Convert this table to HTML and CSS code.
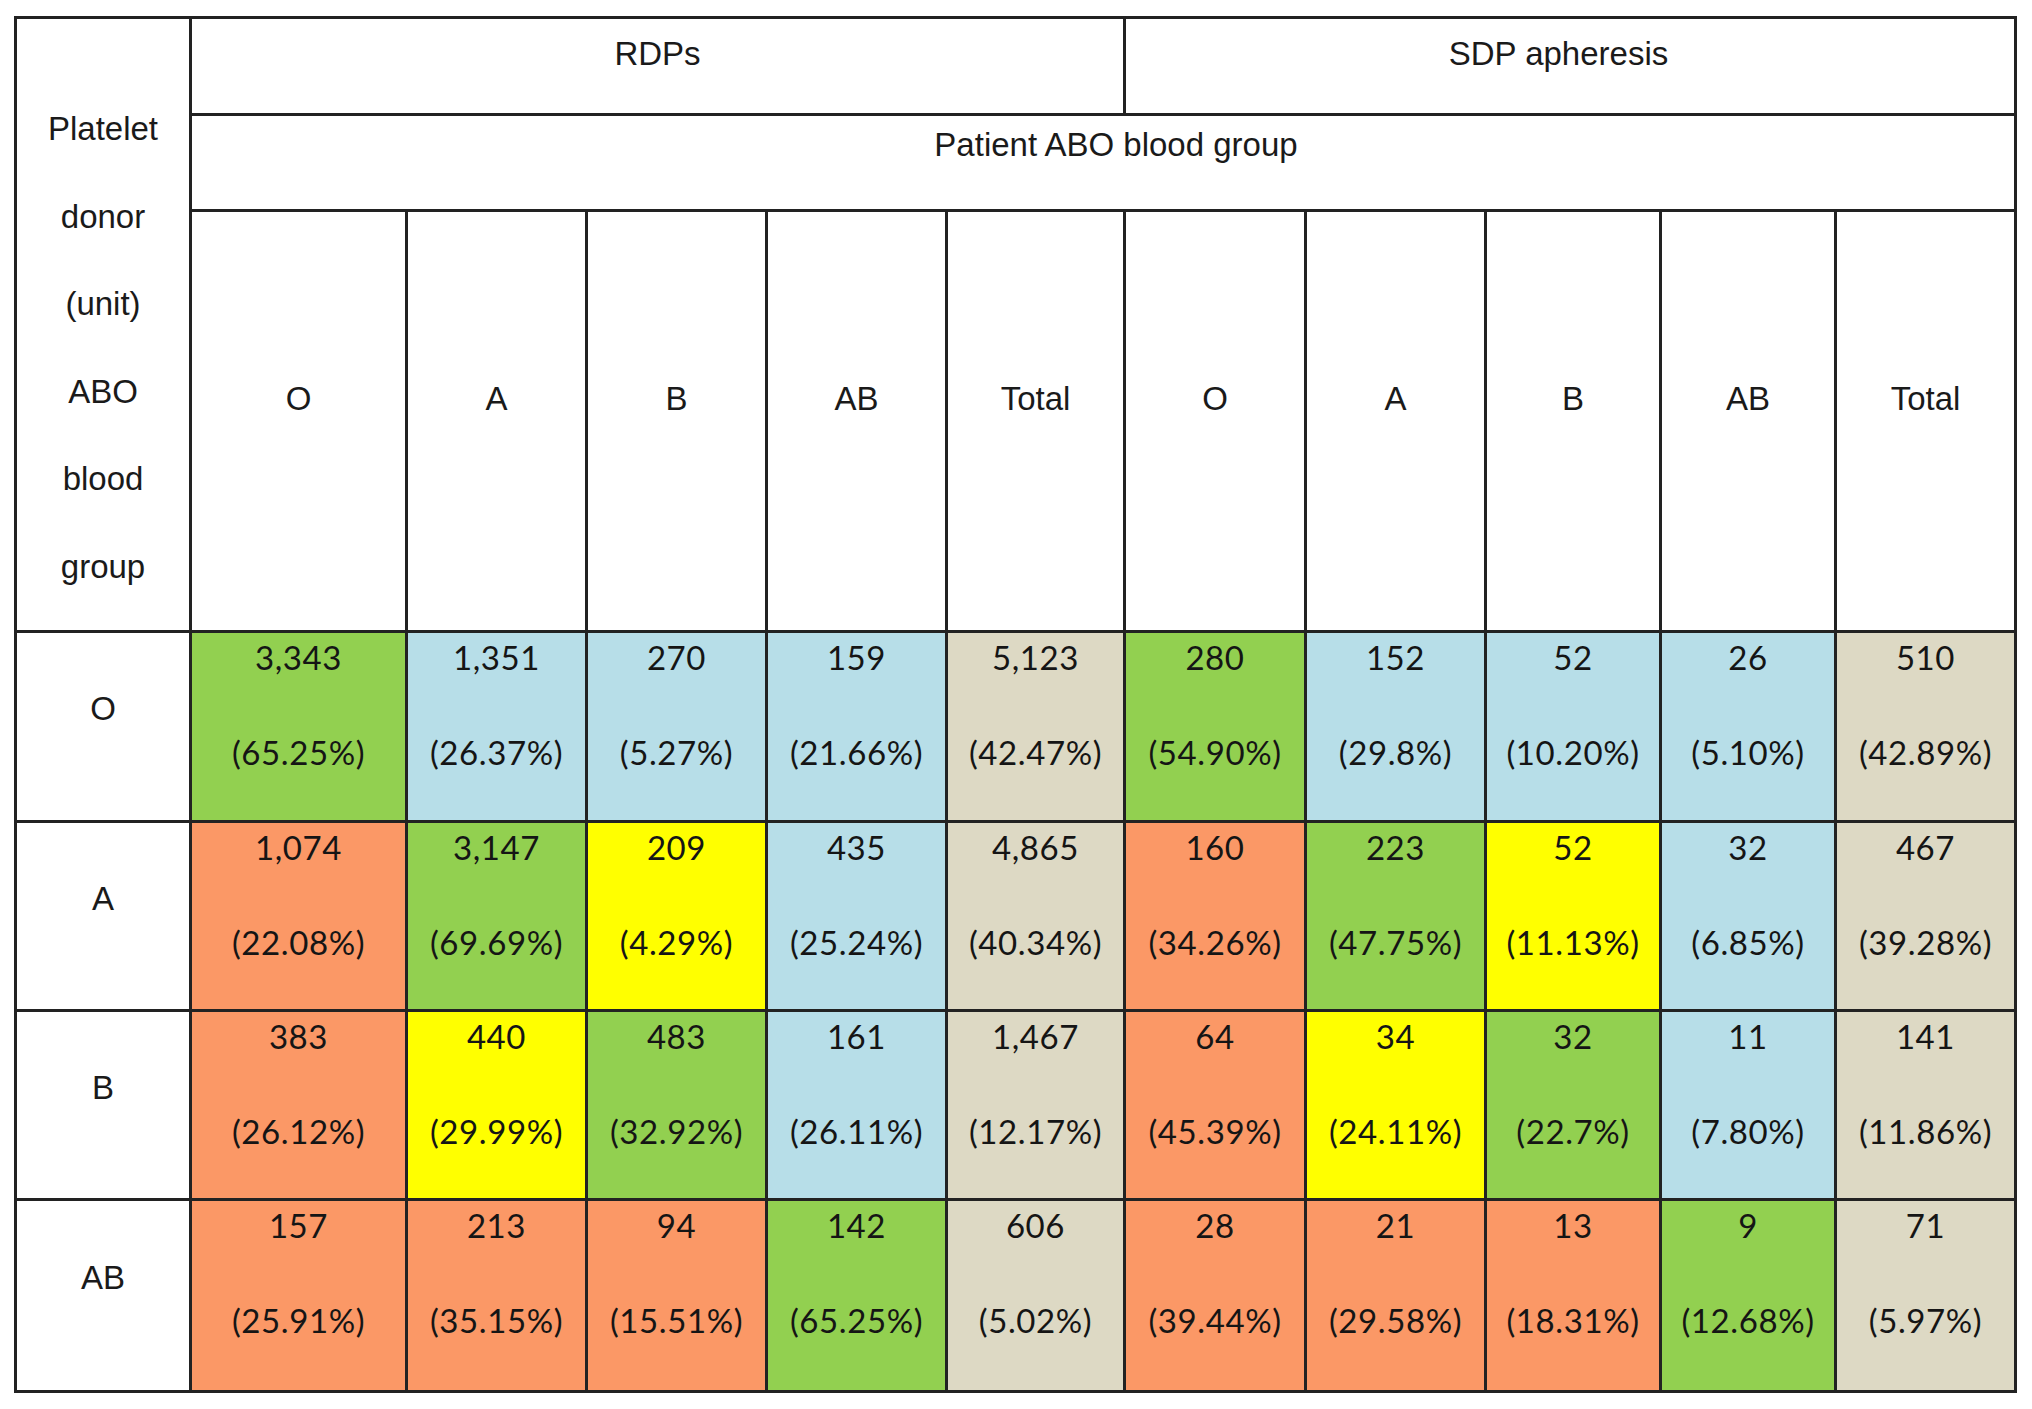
FILE: index.html
```html
<!DOCTYPE html>
<html lang="en">
<head>
<meta charset="utf-8">
<title>Platelet donor ABO blood group</title>
<link rel="stylesheet" href="styles.css">
</head>
<body>
<div class="sheet">
  <div class="cell donor-head">Platelet<br>donor<br>(unit)<br>ABO<br>blood<br>group</div>
  <div class="cell group-head rdp">RDPs</div>
  <div class="cell group-head sdp">SDP apheresis</div>
  <div class="cell patient-head">Patient ABO blood group</div>

  <div class="cell col-head">O</div>
  <div class="cell col-head">A</div>
  <div class="cell col-head">B</div>
  <div class="cell col-head">AB</div>
  <div class="cell col-head">Total</div>
  <div class="cell col-head">O</div>
  <div class="cell col-head">A</div>
  <div class="cell col-head">B</div>
  <div class="cell col-head">AB</div>
  <div class="cell col-head">Total</div>

  <div class="cell row-head">O</div>
  <div class="cell data green"><span class="count">3,343</span><span class="pct">(65.25%)</span></div>
  <div class="cell data blue"><span class="count">1,351</span><span class="pct">(26.37%)</span></div>
  <div class="cell data blue"><span class="count">270</span><span class="pct">(5.27%)</span></div>
  <div class="cell data blue"><span class="count">159</span><span class="pct">(21.66%)</span></div>
  <div class="cell data tan"><span class="count">5,123</span><span class="pct">(42.47%)</span></div>
  <div class="cell data green"><span class="count">280</span><span class="pct">(54.90%)</span></div>
  <div class="cell data blue"><span class="count">152</span><span class="pct">(29.8%)</span></div>
  <div class="cell data blue"><span class="count">52</span><span class="pct">(10.20%)</span></div>
  <div class="cell data blue"><span class="count">26</span><span class="pct">(5.10%)</span></div>
  <div class="cell data tan"><span class="count">510</span><span class="pct">(42.89%)</span></div>

  <div class="cell row-head">A</div>
  <div class="cell data orange"><span class="count">1,074</span><span class="pct">(22.08%)</span></div>
  <div class="cell data green"><span class="count">3,147</span><span class="pct">(69.69%)</span></div>
  <div class="cell data yellow"><span class="count">209</span><span class="pct">(4.29%)</span></div>
  <div class="cell data blue"><span class="count">435</span><span class="pct">(25.24%)</span></div>
  <div class="cell data tan"><span class="count">4,865</span><span class="pct">(40.34%)</span></div>
  <div class="cell data orange"><span class="count">160</span><span class="pct">(34.26%)</span></div>
  <div class="cell data green"><span class="count">223</span><span class="pct">(47.75%)</span></div>
  <div class="cell data yellow"><span class="count">52</span><span class="pct">(11.13%)</span></div>
  <div class="cell data blue"><span class="count">32</span><span class="pct">(6.85%)</span></div>
  <div class="cell data tan"><span class="count">467</span><span class="pct">(39.28%)</span></div>

  <div class="cell row-head">B</div>
  <div class="cell data orange"><span class="count">383</span><span class="pct">(26.12%)</span></div>
  <div class="cell data yellow"><span class="count">440</span><span class="pct">(29.99%)</span></div>
  <div class="cell data green"><span class="count">483</span><span class="pct">(32.92%)</span></div>
  <div class="cell data blue"><span class="count">161</span><span class="pct">(26.11%)</span></div>
  <div class="cell data tan"><span class="count">1,467</span><span class="pct">(12.17%)</span></div>
  <div class="cell data orange"><span class="count">64</span><span class="pct">(45.39%)</span></div>
  <div class="cell data yellow"><span class="count">34</span><span class="pct">(24.11%)</span></div>
  <div class="cell data green"><span class="count">32</span><span class="pct">(22.7%)</span></div>
  <div class="cell data blue"><span class="count">11</span><span class="pct">(7.80%)</span></div>
  <div class="cell data tan"><span class="count">141</span><span class="pct">(11.86%)</span></div>

  <div class="cell row-head">AB</div>
  <div class="cell data orange"><span class="count">157</span><span class="pct">(25.91%)</span></div>
  <div class="cell data orange"><span class="count">213</span><span class="pct">(35.15%)</span></div>
  <div class="cell data orange"><span class="count">94</span><span class="pct">(15.51%)</span></div>
  <div class="cell data green"><span class="count">142</span><span class="pct">(65.25%)</span></div>
  <div class="cell data tan"><span class="count">606</span><span class="pct">(5.02%)</span></div>
  <div class="cell data orange"><span class="count">28</span><span class="pct">(39.44%)</span></div>
  <div class="cell data orange"><span class="count">21</span><span class="pct">(29.58%)</span></div>
  <div class="cell data orange"><span class="count">13</span><span class="pct">(18.31%)</span></div>
  <div class="cell data green"><span class="count">9</span><span class="pct">(12.68%)</span></div>
  <div class="cell data tan"><span class="count">71</span><span class="pct">(5.97%)</span></div>
</div>
</body>
</html>
```

FILE: styles.css
```css
html, body {
  margin: 0;
  padding: 0;
  background: #ffffff;
}

body {
  padding: 16px 0 0 14px;
  font-family: "Liberation Sans", Arial, sans-serif;
  color: #1a1a1a;
}

.sheet {
  display: grid;
  grid-template-columns: 172px 213px 177px 177px 177px 175px 178px 177px 172px 172px 177px;
  grid-template-rows: 94px 93px 418px 187px 186px 186px 189px;
  gap: 3px;
  padding: 3px;
  width: max-content;
  background: #222222;
}

.cell {
  background: #ffffff;
  text-align: center;
  box-sizing: border-box;
  font-size: 33px;
  line-height: 37px;
}

.donor-head {
  grid-row: 1 / span 3;
  line-height: 87.5px;
  padding-top: 66px;
}

.group-head {
  grid-column: span 5;
  padding-top: 16px;
}

.sdp {
  padding-right: 23px;
}

.patient-head {
  grid-column: 2 / span 10;
  padding-top: 10px;
  padding-left: 26px;
}

.col-head {
  padding-top: 168px;
}

.row-head {
  display: flex;
  align-items: center;
  justify-content: center;
  padding-bottom: 36px;
}

.data {
  display: flex;
  flex-direction: column;
  align-items: center;
  padding-top: 4px;
  font-family: Lato, "Liberation Sans", sans-serif;
  font-size: 33px;
  letter-spacing: 0.6px;
  line-height: 40px;
  color: #151515;
}

.data .pct {
  margin-top: 55px;
}

.green { background: #92d050; }
.blue { background: #b7dee8; }
.orange { background: #fb9866; }
.yellow { background: #ffff00; }
.tan { background: #ddd9c4; }
```
